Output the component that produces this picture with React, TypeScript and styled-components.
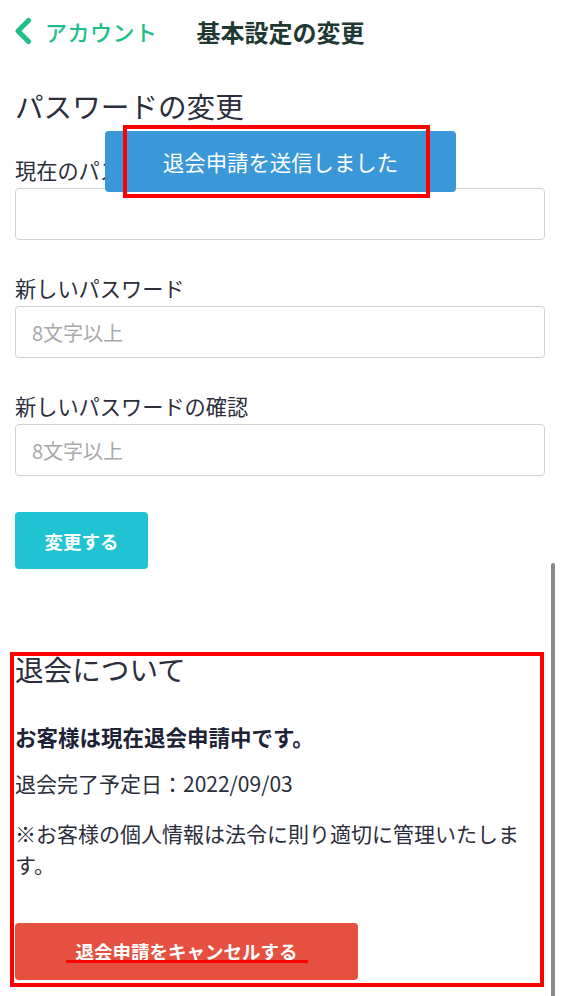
import { createGlobalStyle, styled } from 'styled-components';

const GlobalStyle = createGlobalStyle`
  html, body {
    margin: 0;
    padding: 0;
    background: #fff;
  }
  body {
    font-family: 'Noto Sans CJK JP', 'Noto Sans', sans-serif;
    color: #2b2e3b;
  }
  *, *::before, *::after {
    box-sizing: border-box;
  }
`;

const fields = [
  { label: '現在のパスワード', placeholder: '' },
  { label: '新しいパスワード', placeholder: '8文字以上' },
  { label: '新しいパスワードの確認', placeholder: '8文字以上' },
];

const App = () => {
  return (
    <Page>
      <GlobalStyle />
      <Header>
        <BackLink>
          <svg width="18" height="28" viewBox="0 0 18 28" fill="none">
            <path
              d="M14.5 3.5L4 14L14.5 24.5"
              stroke="#1fbf8c"
              strokeWidth="5"
              strokeLinecap="round"
              strokeLinejoin="round"
            />
          </svg>
          <BackText>アカウント</BackText>
        </BackLink>
        <HeaderTitle>基本設定の変更</HeaderTitle>
      </Header>

      <Main>
        <SectionTitle>パスワードの変更</SectionTitle>
        {fields.map((field) => (
          <Field key={field.label}>
            <Label>{field.label}</Label>
            <Input type="password" placeholder={field.placeholder} />
          </Field>
        ))}
        <SubmitButton>変更する</SubmitButton>

        <WithdrawSection>
          <WithdrawTitle>退会について</WithdrawTitle>
          <StatusText>お客様は現在退会申請中です。</StatusText>
          <BodyText>退会完了予定日：2022/09/03</BodyText>
          <NoteText>※お客様の個人情報は法令に則り適切に管理いたします。</NoteText>
          <CancelButton>
            退会申請をキャンセルする
            <Underline />
          </CancelButton>
        </WithdrawSection>
      </Main>

      <Toast>退会申請を送信しました</Toast>
      <ScrollIndicator />
    </Page>
  );
};

export default App;

const Page = styled.div`
  position: relative;
  width: 571px;
  height: 996px;
  overflow: hidden;
`;

const Header = styled.header`
  display: flex;
  align-items: center;
  height: 62px;
  padding: 0 14px;
`;

const BackLink = styled.div`
  display: flex;
  align-items: center;
  gap: 13px;
  margin-right: 39px;
`;

const BackText = styled.span`
  color: #1fbf8c;
  font-size: 22px;
  font-weight: 500;
  letter-spacing: 0.5px;
`;

const HeaderTitle = styled.h1`
  margin: 0;
  color: #1f3a33;
  font-size: 24px;
  font-weight: 700;
`;

const Main = styled.main`
  display: flex;
  flex-direction: column;
  padding: 24px 26px 0 15px;
`;

const SectionTitle = styled.h2`
  margin: 0 0 29px;
  font-size: 28.6px;
  font-weight: 400;
  line-height: 40px;
`;

const Field = styled.div`
  display: flex;
  flex-direction: column;
  margin-bottom: 33px;
`;

const Label = styled.label`
  margin-bottom: 3px;
  font-size: 21.2px;
  line-height: 30px;
`;

const Input = styled.input`
  width: 530px;
  height: 52px;
  padding: 0 16px;
  border: 1.5px solid #d3d3d3;
  border-radius: 4px;
  font-family: inherit;
  font-size: 20px;
  outline: none;

  &::placeholder {
    color: #a9a9a9;
  }
`;

const SubmitButton = styled.button`
  width: 133px;
  height: 57px;
  margin-top: 3px;
  border: none;
  border-radius: 4px;
  background: #1fc3d2;
  color: #fff;
  font-family: inherit;
  font-size: 18.5px;
  font-weight: 700;
`;

const WithdrawSection = styled.section`
  position: relative;
  display: flex;
  flex-direction: column;
  align-items: flex-start;
  margin-top: 80px;

  &::after {
    content: '';
    position: absolute;
    left: -5px;
    top: 3px;
    width: 534px;
    height: 335px;
    border: 4px solid #f00;
    pointer-events: none;
  }
`;

const WithdrawTitle = styled.h2`
  margin: 0 0 32px;
  font-size: 28.6px;
  font-weight: 400;
  line-height: 40px;
`;

const StatusText = styled.p`
  margin: 0 0 16px;
  color: #1e2236;
  font-size: 21.5px;
  font-weight: 700;
  line-height: 31px;
`;

const BodyText = styled.p`
  margin: 0 0 19px;
  font-size: 21px;
  line-height: 31px;
`;

const NoteText = styled(BodyText)`
  width: 515px;
  margin-bottom: 43px;
`;

const CancelButton = styled.button`
  position: relative;
  width: 343px;
  height: 57px;
  padding-bottom: 2px;
  border: none;
  border-radius: 4px;
  background: #e55040;
  color: #fff;
  font-family: inherit;
  font-size: 18.5px;
  font-weight: 700;
`;

const Underline = styled.span`
  position: absolute;
  left: 51px;
  top: 37px;
  width: 242px;
  height: 3px;
  background: #f00;
`;

const Toast = styled.div`
  position: absolute;
  left: 105px;
  top: 131px;
  display: flex;
  align-items: center;
  justify-content: center;
  width: 351px;
  height: 61px;
  border-radius: 4px;
  background: #3a98d8;
  color: #fff;
  font-size: 21.4px;

  &::after {
    content: '';
    position: absolute;
    left: 18px;
    top: -6px;
    width: 307px;
    height: 73px;
    border: 4px solid #f00;
  }
`;

const ScrollIndicator = styled.div`
  position: absolute;
  left: 551px;
  top: 563px;
  width: 4px;
  height: 433px;
  border-radius: 2px 2px 0 0;
  background: #8a8a8a;
`;
